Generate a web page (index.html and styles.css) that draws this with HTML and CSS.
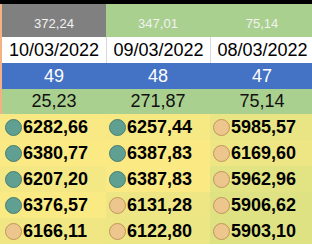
FILE: index.html
```html
<!DOCTYPE html>
<html>
<head>
<meta charset="utf-8">
<link rel="stylesheet" href="styles.css">
</head>
<body>
<div class="topbar"></div>
<div class="sheet">
  <div class="edge"></div>
  <div class="cell top gray">372,24</div>
  <div class="cell top green">347,01</div>
  <div class="cell top green">75,14</div>

  <div class="cell date">10/03/2022</div>
  <div class="cell date">09/03/2022</div>
  <div class="cell date">08/03/2022</div>

  <div class="cell num blue">49</div>
  <div class="cell num blue">48</div>
  <div class="cell num blue">47</div>

  <div class="cell num lgreen">25,23</div>
  <div class="cell num lgreen">271,87</div>
  <div class="cell num lgreen">75,14</div>

  <div class="pad" style="background:#f8e984"></div>
  <div class="cell data" style="background:#f8e984"><span class="dot hi"></span>6282,66</div>
  <div class="cell data" style="background:#f6e984"><span class="dot hi"></span>6257,44</div>
  <div class="cell data" style="background:#e9e584"><span class="dot lo"></span>5985,57</div>

  <div class="pad" style="background:#fbea84"></div>
  <div class="cell data" style="background:#fbea84"><span class="dot hi"></span>6380,77</div>
  <div class="cell data" style="background:#fbea84"><span class="dot hi"></span>6387,83</div>
  <div class="cell data" style="background:#eee684"><span class="dot lo"></span>6169,60</div>

  <div class="pad" style="background:#f3e884"></div>
  <div class="cell data" style="background:#f3e884"><span class="dot hi"></span>6207,20</div>
  <div class="cell data" style="background:#fbea84"><span class="dot hi"></span>6387,83</div>
  <div class="cell data" style="background:#e2e383"><span class="dot lo"></span>5962,96</div>

  <div class="pad" style="background:#faea84"></div>
  <div class="cell data" style="background:#faea84"><span class="dot hi"></span>6376,57</div>
  <div class="cell data" style="background:#eee684"><span class="dot lo"></span>6131,28</div>
  <div class="cell data" style="background:#dfe283"><span class="dot lo"></span>5906,62</div>

  <div class="pad" style="background:#f0e784"></div>
  <div class="cell data" style="background:#f0e784"><span class="dot lo"></span>6166,11</div>
  <div class="cell data" style="background:#ede684"><span class="dot lo"></span>6122,80</div>
  <div class="cell data" style="background:#dfe283"><span class="dot lo"></span>5903,10</div>
</div>
</body>
</html>
```
FILE: styles.css
```css
html, body {
  margin: 0;
  padding: 0;
  width: 312px;
  height: 245px;
  overflow: hidden;
  background: #ffffff;
}
.topbar {
  height: 4px;
  background: #000000;
}
.sheet {
  display: grid;
  grid-template-columns: 2px 104px 104px 104px;
  grid-template-rows: 33px 26px 26px 25px repeat(5, 26px);
  font-family: "Liberation Sans", Arial, sans-serif;
}
.edge {
  grid-column: 1;
  grid-row: 1 / 5;
  background: #f4b183;
}
.cell {
  display: flex;
  align-items: center;
  justify-content: center;
  white-space: nowrap;
  overflow: hidden;
}
.top {
  align-items: flex-end;
  padding-bottom: 6px;
  box-sizing: border-box;
  font-size: 13px;
  color: #f2f2f2;
}
.gray { background: #808080; }
.green { background: #a9d08e; }
.date {
  font-size: 18px;
  color: #000000;
  background: #ffffff;
  border-left: 1px solid #d9d9d9;
}
.date:nth-of-type(5) { border-left: none; }
.num { font-size: 18px; }
.blue { background: #4472c4; color: #ffffff; }
.lgreen { background: #a9d08e; color: #111111; }
.data {
  justify-content: flex-start;
  padding-left: 3px;
  font-size: 18px;
  font-weight: bold;
  color: #000000;
}
.dot {
  width: 15px;
  height: 15px;
  border-radius: 50%;
  flex: none;
  margin-right: 1px;
}
.hi {
  background: #5fa092;
  border: 1px solid #4a7d70;
}
.lo {
  background: #edc68e;
  border: 1px solid #c2955a;
}
```
